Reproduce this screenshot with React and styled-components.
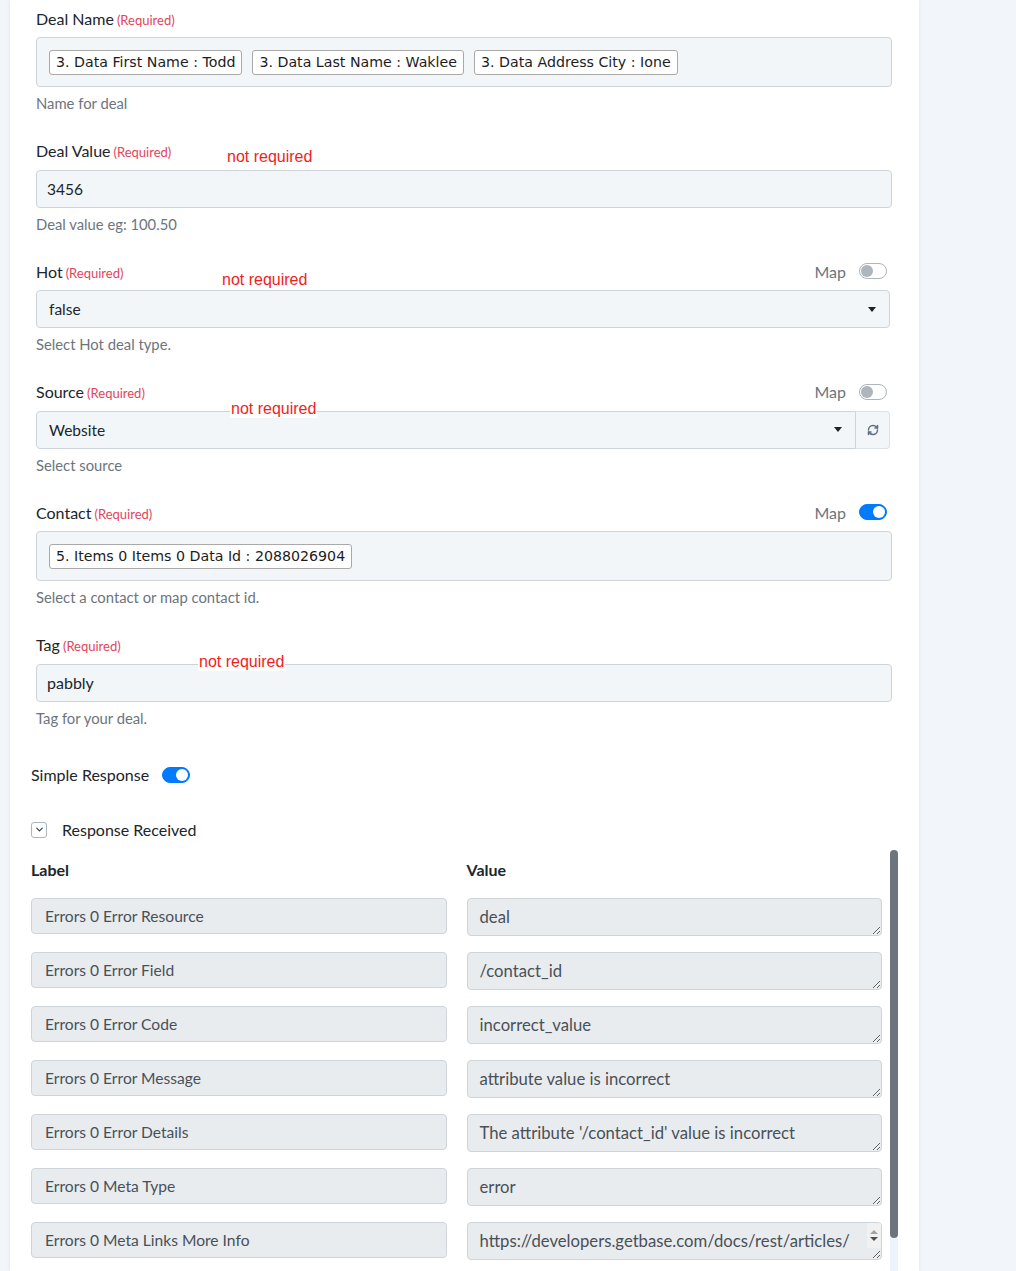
import React from "react";
import styled, { createGlobalStyle } from "styled-components";
import { RefreshCw, ChevronDown } from "lucide-react";

const GlobalStyle = createGlobalStyle`
  html, body {
    margin: 0;
    padding: 0;
    height: 1271px;
    overflow: hidden;
    background: #f2f5f9;
  }
  body {
    font-family: Lato, "Noto Sans", sans-serif;
    color: #212529;
  }
  *, *::before, *::after { box-sizing: border-box; }
`;

const Page = styled.div`
  display: flex;
  height: 1271px;
  padding-left: 10px;
`;

const Card = styled.div`
  width: 909px;
  height: 100%;
  background: #fff;
  box-shadow: 0 0 4px rgba(30, 50, 80, 0.08);
  display: flex;
  flex-direction: column;
  padding: 8px 21px 0 21px;
`;

const Fields = styled.div`
  padding: 0 6px 0 5px;
`;

const Group = styled.div`
  position: relative;
  & + & { margin-top: 27.5px; }
`;

const LabelRow = styled.div`
  display: flex;
  align-items: center;
  justify-content: space-between;
  height: 20px;
  margin-bottom: 9px;
`;

const Label = styled.div`
  font-size: 16px;
  color: #212529;
`;

const Req = styled.span`
  font-size: 13px;
  color: #e2445c;
  margin-left: 3px;
`;

const MapWrap = styled.div`
  display: flex;
  align-items: center;
  gap: 13px;
  font-size: 16px;
  color: #6c757d;
  margin-right: 5px;
`;

const Switch = styled.span`
  position: relative;
  display: inline-block;
  width: 28px;
  height: 16px;
  border-radius: 8px;
  border: 1px solid ${(p) => (p.$on ? "#007bff" : "#adb5bd")};
  background: ${(p) => (p.$on ? "#007bff" : "#fff")};
  &::after {
    content: "";
    position: absolute;
    top: 1px;
    left: ${(p) => (p.$on ? "13px" : "1px")};
    width: 12px;
    height: 12px;
    border-radius: 50%;
    background: ${(p) => (p.$on ? "#fff" : "#adb5bd")};
  }
`;

const TagBox = styled.div`
  height: 50px;
  display: flex;
  align-items: center;
  gap: 10px;
  padding: 0 12px;
  background: #f2f6f9;
  border: 1px solid #ced4da;
  border-radius: 4px;
`;

const Pill = styled.span`
  font-family: "DejaVu Sans", Verdana, sans-serif;
  font-size: 14.2px;
  line-height: 19px;
  padding: 2px 6px;
  border: 1px solid #a9a9a9;
  border-radius: 3px;
  background: #fff;
  color: #1d1d1d;
  white-space: nowrap;
`;

const Input = styled.div`
  height: 38px;
  display: flex;
  align-items: center;
  padding: 0 10px;
  background: #f2f6f9;
  border: 1px solid #ced4da;
  border-radius: 4px;
  font-size: ${(p) => p.$size || 15.5}px;
  color: #212529;
`;

const SelectRow = styled.div`
  display: flex;
  margin-right: 2px;
`;

const Select = styled.div`
  flex: 1;
  height: 38px;
  display: flex;
  align-items: center;
  justify-content: space-between;
  padding: 0 13px 0 12px;
  background: #f2f6f9;
  border: 1px solid #ced4da;
  border-radius: ${(p) => (p.$joined ? "4px 0 0 4px" : "4px")};
  font-size: 15.5px;
  color: #212529;
`;

const Caret = styled.span`
  width: 0;
  height: 0;
  border-left: 4.5px solid transparent;
  border-right: 4.5px solid transparent;
  border-top: 5px solid #222;
`;

const RefreshButton = styled.div`
  width: 34px;
  height: 38px;
  display: flex;
  align-items: center;
  justify-content: center;
  background: #f2f6f9;
  border: 1px solid #dde2e7;
  border-left: none;
  border-radius: 0 4px 4px 0;
  color: #5f6f82;
`;

const Help = styled.div`
  margin-top: 6px;
  font-size: 14.8px;
  line-height: 20px;
  color: #6c757d;
`;

const Note = styled.span`
  position: absolute;
  left: ${(p) => p.$x}px;
  top: ${(p) => p.$y}px;
  font-family: "Liberation Sans", Arial, sans-serif;
  font-size: 16px;
  line-height: 18px;
  color: #f01d1d;
  background: #fff;
  padding: 0 1px;
`;

const ToggleRow = styled.div`
  display: flex;
  align-items: center;
  gap: 13px;
  height: 20px;
  margin-top: 37px;
  font-size: 16px;
  color: #212529;
`;

const ResponseRow = styled.div`
  display: flex;
  align-items: center;
  gap: 15px;
  height: 20px;
  margin-top: 35px;
  font-size: 16px;
  color: #212529;
`;

const ChevBox = styled.span`
  width: 16px;
  height: 16px;
  display: flex;
  align-items: center;
  justify-content: center;
  border: 1px solid #adb5bd;
  border-radius: 3px;
  color: #343a40;
`;

/* Response list: clipped content column plus a slim scroll track beside it */
const ScrollArea = styled.div`
  flex: 1;
  min-height: 0;
  margin-top: 10px;
  display: flex;
`;

const ScrollContent = styled.div`
  flex: 1;
  min-width: 0;
  overflow: hidden;
  padding-right: 8px;
`;

const Track = styled.div`
  width: 8px;
  display: flex;
  flex-direction: column;
  background: #edf3fb;
`;

const Thumb = styled.div`
  height: 388px;
  background: #6c757d;
  border-radius: 4px;
`;

const Grid = styled.div`
  display: grid;
  grid-template-columns: 1fr 1fr;
  column-gap: 20px;
  row-gap: 16px;
  align-items: start;
`;

const HeadRow = styled(Grid)`
  height: 40px;
  align-items: center;
  margin-bottom: 8px;
  font-size: 16px;
  font-weight: 700;
  color: #212529;
`;

const KeyField = styled.input`
  width: 100%;
  height: 36px;
  padding: 0 13px;
  background: #e9ecef;
  border: 1px solid #ced4da;
  border-radius: 4px;
  font-family: Lato, "Noto Sans", sans-serif;
  font-size: 15.6px;
  color: #495057;
  outline: none;
`;

const ValueCell = styled.div`
  position: relative;
`;

const ValueField = styled.textarea`
  display: block;
  width: 100%;
  height: 38px;
  padding: 6px ${(p) => (p.$overflow ? 26 : 12)}px 6px 12px;
  background: #e9ecef;
  border: 1px solid #ced4da;
  border-radius: 4px;
  font-family: Lato, "Noto Sans", sans-serif;
  font-size: 16.7px;
  line-height: 24px;
  color: #495057;
  resize: vertical;
  outline: none;
  overflow: hidden;
`;

/* little native-looking scroll buttons of an overflowing textarea */
const MiniScroll = styled.div`
  position: absolute;
  top: 1px;
  right: 1px;
  width: 14px;
  height: 25px;
  background: #f1f1f1;
  border-top-right-radius: 3px;
  display: flex;
  flex-direction: column;
  align-items: center;
  justify-content: center;
  gap: 3px;
`;

const Arrow = styled.span`
  width: 0;
  height: 0;
  border-left: 4px solid transparent;
  border-right: 4px solid transparent;
  ${(p) =>
    p.$up
      ? "border-bottom: 4px solid #a3a3a3;"
      : "border-top: 4px solid #505050;"}
`;

const responseItems = [
  ["Errors 0 Error Resource", "deal"],
  ["Errors 0 Error Field", "/contact_id"],
  ["Errors 0 Error Code", "incorrect_value"],
  ["Errors 0 Error Message", "attribute value is incorrect"],
  ["Errors 0 Error Details", "The attribute '/contact_id' value is incorrect"],
  ["Errors 0 Meta Type", "error"],
  ["Errors 0 Meta Links More Info", "https://developers.getbase.com/docs/rest/articles/errors", true],
  ["Meta Type", "errors"],
];

function MapToggle({ on }) {
  return (
    <MapWrap>
      Map
      <Switch $on={on} />
    </MapWrap>
  );
}

function FieldLabel({ children, map }) {
  return (
    <LabelRow>
      <Label>
        {children}
        <Req>(Required)</Req>
      </Label>
      {map !== undefined && <MapToggle on={map} />}
    </LabelRow>
  );
}

export default function App() {
  return (
    <>
      <GlobalStyle />
      <Page>
        <Card>
          <Fields>
            <Group>
              <FieldLabel>Deal Name</FieldLabel>
              <TagBox>
                <Pill>3. Data First Name : Todd</Pill>
                <Pill>3. Data Last Name : Waklee</Pill>
                <Pill>3. Data Address City : Ione</Pill>
              </TagBox>
              <Help>Name for deal</Help>
            </Group>

            <Group>
              <FieldLabel>Deal Value</FieldLabel>
              <Input>3456</Input>
              <Help>Deal value eg: 100.50</Help>
              <Note $x={190} $y={7}>not required</Note>
            </Group>

            <Group>
              <FieldLabel map={false}>Hot</FieldLabel>
              <SelectRow>
                <Select>
                  false
                  <Caret />
                </Select>
              </SelectRow>
              <Help>Select Hot deal type.</Help>
              <Note $x={185} $y={10}>not required</Note>
            </Group>

            <Group>
              <FieldLabel map={false}>Source</FieldLabel>
              <SelectRow>
                <Select $joined>
                  Website
                  <Caret />
                </Select>
                <RefreshButton>
                  <RefreshCw size={12} strokeWidth={3} />
                </RefreshButton>
              </SelectRow>
              <Help>Select source</Help>
              <Note $x={194} $y={18}>not required</Note>
            </Group>

            <Group>
              <FieldLabel map={true}>Contact</FieldLabel>
              <TagBox>
                <Pill>5. Items 0 Items 0 Data Id : 2088026904</Pill>
              </TagBox>
              <Help>Select a contact or map contact id.</Help>
            </Group>

            <Group>
              <FieldLabel>Tag</FieldLabel>
              <Input $size={16}>pabbly</Input>
              <Help>Tag for your deal.</Help>
              <Note $x={162} $y={18}>not required</Note>
            </Group>
          </Fields>

          <ToggleRow>
            Simple Response
            <Switch $on />
          </ToggleRow>

          <ResponseRow>
            <ChevBox>
              <ChevronDown size={11} strokeWidth={2.5} />
            </ChevBox>
            Response Received
          </ResponseRow>

          <ScrollArea>
            <ScrollContent>
              <HeadRow>
                <div>Label</div>
                <div>Value</div>
              </HeadRow>
              <Grid>
                {responseItems.map(([key, value, overflow]) => (
                  <React.Fragment key={key}>
                    <KeyField readOnly value={key} />
                    <ValueCell>
                      <ValueField readOnly rows={1} value={value} $overflow={overflow} />
                      {overflow && (
                        <MiniScroll>
                          <Arrow $up />
                          <Arrow />
                        </MiniScroll>
                      )}
                    </ValueCell>
                  </React.Fragment>
                ))}
              </Grid>
            </ScrollContent>
            <Track>
              <Thumb />
            </Track>
          </ScrollArea>
        </Card>
      </Page>
    </>
  );
}
